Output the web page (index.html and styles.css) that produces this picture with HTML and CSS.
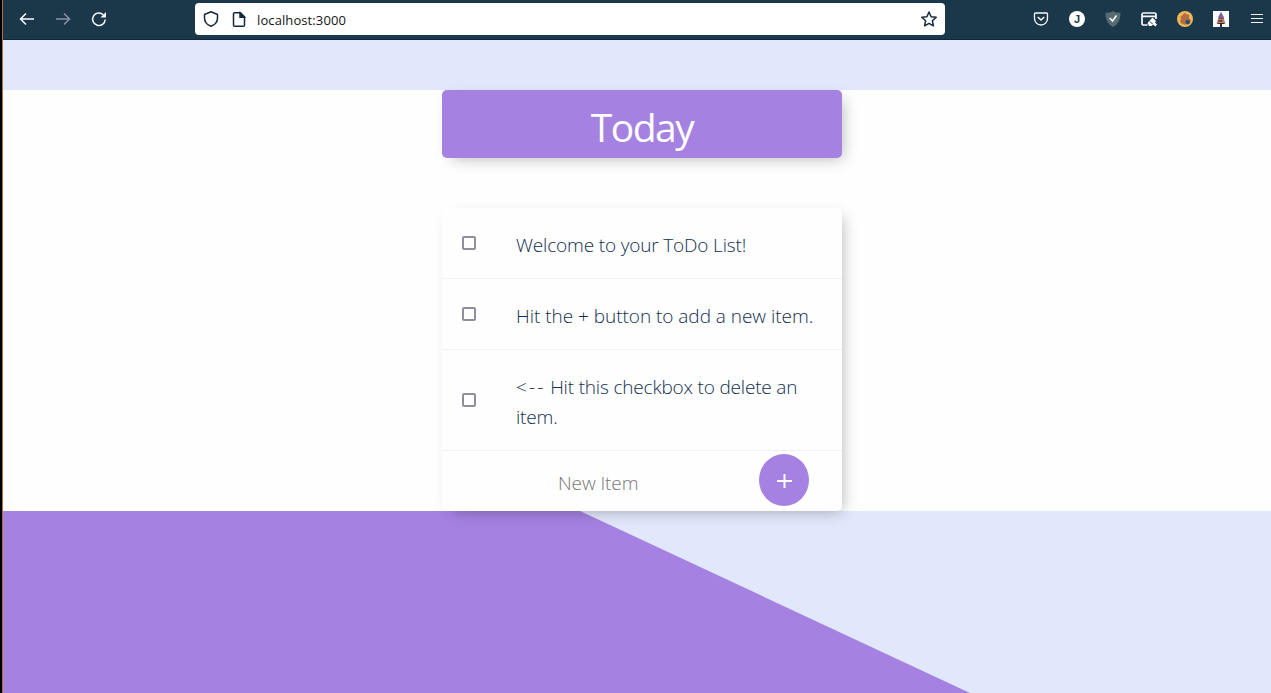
FILE: index.html
```html
<!DOCTYPE html>
<html lang="en">
<head>
<meta charset="utf-8">
<title>Today</title>
<link rel="stylesheet" href="styles.css">
</head>
<body>
<div class="window">
  <header class="toolbar">
    <nav class="nav">
      <svg class="icon" viewBox="0 0 16 16"><path d="M15 8H1.500M7 2.500 1.500 8 7 13.500"/></svg>
      <svg class="icon dim" viewBox="0 0 16 16"><path d="M1 8h13.500M9 2.500 14.500 8 9 13.500"/></svg>
      <svg class="icon" viewBox="0 0 16 16"><path d="M14.200 8.500A6.300 6.300 0 1 1 12.300 3.700"/><path class="solid" d="M15 1v5.500H9.500z"/></svg>
    </nav>
    <div class="address">
      <svg class="icon dark" viewBox="0 0 16 16"><path d="M8 .8 14.500 3.500V7c0 4-3 7-6.500 8.300C4.500 14 1.500 11 1.500 7V3.500z" stroke-linejoin="round"/></svg>
      <svg class="icon dark" viewBox="0 0 16 16"><path d="M3.500 1.800h6l4 4v8.400a1 1 0 0 1-1 1h-9a1 1 0 0 1-1-1V2.800a1 1 0 0 1 1-1z"/><path d="M9 2v4.300h4.400z" class="ink"/></svg>
      <span class="url">localhost:3000</span>
      <svg class="icon dark star" viewBox="0 0 16 16"><path d="m8 1 2.100 4.700 5.100.6-3.800 3.500 1 5L8 12.300l-4.400 2.500 1-5L.8 6.300l5.100-.6z" stroke-linejoin="round"/></svg>
    </div>
    <div class="extensions">
      <svg class="icon" viewBox="0 0 16 16"><path d="M2.500 2h11a1 1 0 0 1 1 1v4.500a6.500 6.500 0 0 1-13 0V3a1 1 0 0 1 1-1z" stroke-width="1.300"/><path d="m4.800 6 3.200 3 3.200-3"/></svg>
      <span class="avatar">J</span>
      <svg class="icon" viewBox="0 0 16 16"><path d="M8 0c2 1.500 5 1.800 7.500 1.800C15.500 9 13 13.500 8 16 3 13.500.5 9 .5 1.800 3 1.800 6 1.500 8 0z" fill="#566c70" stroke="none"/><path d="m4.700 7 2.800 3 4-5.500" stroke-width="1.600"/></svg>
      <svg class="icon" viewBox="0 0 16 16"><path d="M6.500 14H2.500A1.500 1.500 0 0 1 1 12.500v-9A1.500 1.500 0 0 1 2.500 2h11A1.500 1.500 0 0 1 15 3.500V8M1 5.300h14" stroke-width="1.700"/><path class="solid" d="m6.500 12 5-5.500 3.500 3.500-1 1.500 2 2-1.500 2-2.500-2-1.500 1.500H8z"/><path d="m9 10.500 2.500 2.500" stroke="#1b384c" stroke-width="1"/></svg>
      <svg class="icon" viewBox="0 0 16 16"><circle cx="8" cy="8" r="8" fill="#f0b758" stroke="none"/><path d="m8 1.800 1.500 1.500 2.500.5v3l2 3-2 3.500-4 .5-4-1.500-1-2 1-2L3.500 6 6 3.500z" fill="#b56e42" stroke="none"/><circle cx="10.700" cy="11" r="2.300" fill="#20556f" stroke="none"/></svg>
      <svg class="icon" viewBox="0 0 16 16"><path d="M0 0h16v16H0z" fill="#fbfaff" stroke="none"/><path d="m8 .8 3 5.700H5z" fill="#8058ae" stroke="none"/><path d="M5.500 7h5l2 5.500h-9z" fill="#c07c62" stroke="none"/><path d="M5.500 7h5.500M5.500 9.800h4M4.500 12.500h7" stroke="#372b32" stroke-width="1.200"/><path d="M8 12.500V16" stroke="#372b32" stroke-width="2"/></svg>
      <svg class="icon" viewBox="0 0 16 16"><path d="M2 3.500h12M2 7.500h12M2 11.500h12" stroke-width="1.200"/></svg>
    </div>
  </header>
  <main class="page">
    <div class="content">
      <h1 class="heading">Today</h1>
      <section class="list">
        <div class="item"><span class="check"></span><p class="text welcome">Welcome to your ToDo List!</p></div>
        <div class="item"><span class="check"></span><p class="text">Hit the + button to add a new item.</p></div>
        <div class="item"><span class="check"></span><p class="text"><span class="arrow">&lt;--</span> Hit this checkbox to delete an<br>item.</p></div>
        <form class="entry">
          <input class="new-item" type="text" placeholder="New Item" aria-label="New Item">
          <button class="add" type="button" aria-label="Add"><svg viewBox="0 0 16 16" width="16" height="16"><path d="M8.500 1v14M1 8h15"/></svg></button>
        </form>
      </section>
    </div>
    <div class="slope"></div>
  </main>
</div>
</body>
</html>
```
FILE: styles.css
```css
* { box-sizing: border-box; }

body {
  margin: 0;
  height: 693px;
  overflow: hidden;
  font-family: "Open Sans", "Noto Sans", sans-serif;
}

.window {
  display: flex;
  flex-direction: column;
  height: 693px;
  border-left: 2px solid #000;
  box-shadow: inset 1px 0 #ad704c;
  padding-left: 1px;
}

.toolbar {
  display: flex;
  align-items: center;
  height: 40px;
  padding: 0 6px 2px 16px;
  background: #1a384a;
  border-bottom: 1px solid #10273a;
}

.icon {
  display: block;
  width: 16px;
  height: 16px;
  flex: none;
  fill: none;
  stroke: #fafafd;
  stroke-width: 1.5;
}

.solid { fill: #fafafd; stroke: none; }
.dim { stroke: #8b91a0; }
.dark { stroke: #152a3c; }
.ink { fill: #152a3c; }

.nav { display: flex; gap: 20px; width: 176px; }

.address {
  display: flex;
  align-items: center;
  width: 750px;
  height: 32px;
  padding: 0 8px;
  gap: 12px;
  border-radius: 4px;
  background: #fff;
}

.url {
  margin-left: -2px;
  padding-top: 2px;
  font-size: 13px;
  letter-spacing: 0.1px;
  color: #15141a;
}

.star { margin-left: auto; }

.extensions { display: flex; gap: 20px; margin-left: auto; }

.avatar {
  width: 16px;
  height: 16px;
  border-radius: 50%;
  background: #fff;
  color: #1b384c;
  font: bold 11px/16px "Liberation Sans", sans-serif;
  text-align: center;
}

.page {
  display: flex;
  flex-direction: column;
  flex: 1;
  padding-top: 50px;
  background: #e2e8fc;
}

.content {
  position: relative;
  z-index: 1;
  display: flex;
  flex-direction: column;
  gap: 50px;
  height: 421px;
  padding-left: 439px;
  background: #fefefe;
}

.heading, .list {
  width: 400px;
  margin: 0;
  border-radius: 5px;
  box-shadow: 5px 5px 15px -5px rgba(0, 0, 0, 0.3);
}

.heading {
  height: 68px;
  background: #a582e1;
  color: #fff;
  font-size: 39px;
  font-weight: 400;
  letter-spacing: -1.5px;
  line-height: 73px;
  text-align: center;
}

.list { background: #fefefe; color: #122e50; }

.item {
  display: flex;
  align-items: center;
  padding: 20px;
  border-bottom: 1px solid #f1f1f1;
}

.check {
  width: 14px;
  height: 14px;
  border: 2px solid #8f8f9d;
  border-radius: 2px;
}

.text {
  margin: 2px 0 -2px 40px;
  font-size: 19px;
  font-weight: 300;
  letter-spacing: -0.03px;
  line-height: 30px;
  white-space: nowrap;
}

.welcome { letter-spacing: -0.16px; }
.text:has(.arrow) { letter-spacing: -0.18px; }
.arrow { letter-spacing: 2.1px; }

.entry { display: flex; height: 60px; padding: 3px 0 0 116px; }

.new-item {
  width: 201px;
  height: 57px;
  padding: 0;
  border: 0;
  background: transparent;
  font: 300 19px "Open Sans", sans-serif;
  letter-spacing: -0.1px;
}

.new-item::placeholder { color: #777; opacity: 1; }

.add {
  display: grid;
  place-items: center;
  width: 50px;
  height: 52px;
  padding: 2px 0 0;
  border: 0;
  border-radius: 50%;
  background: #a582e1;
}

.add svg { fill: none; stroke: #fff; stroke-width: 2; }

.slope {
  flex: 1;
  background: #a582e1;
  clip-path: polygon(0 0, 577px 0, 967px 100%, 0 100%);
}
```
